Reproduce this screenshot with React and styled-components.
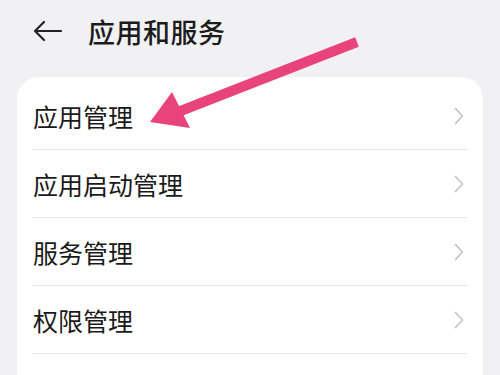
import React from "react"
import styled, { createGlobalStyle } from "styled-components"

const GlobalStyle = createGlobalStyle`
  html, body {
    margin: 0;
    padding: 0;
    background: #f1f1f3;
  }
  body {
    font-family: "Noto Sans CJK SC", "Noto Sans", sans-serif;
  }
`

const Screen = styled.div`
  position: relative;
  width: 500px;
  height: 375px;
  overflow: hidden;
  background: #f1f1f3;
`

const Header = styled.div`
  display: flex;
  align-items: center;
  height: 62px;
  padding: 0 0 0 33px;
  gap: 24px;
`

const BackButton = styled.div`
  display: flex;
  align-items: center;
  width: 31px;
  height: 24px;
  color: #222;
`

const Title = styled.h1`
  margin: 0;
  font-size: 27px;
  font-weight: 500;
  color: #1c1c1c;
  letter-spacing: 0.5px;
`

const Card = styled.div`
  margin: 15px 17px 0 17px;
  background: #fff;
  border-radius: 22px;
  padding: 5px 16px 0 16px;
`

const Row = styled.div`
  display: flex;
  align-items: center;
  justify-content: space-between;
  height: 67px;
  border-bottom: ${(p) => (p.last ? "none" : "1px solid #e6e6e6")};
`

const Label = styled.span`
  font-size: 25px;
  color: #1a1a1a;
  font-weight: 400;
`

const Chevron = styled.div`
  display: flex;
  align-items: center;
  padding-right: 3px;
  color: #c2c2c2;
`

const Overlay = styled.svg`
  position: absolute;
  left: 0;
  top: 0;
  pointer-events: none;
`

const items = ["应用管理", "应用启动管理", "服务管理", "权限管理", "默认应用"]

export default function App() {
  return (
    <Screen>
      <GlobalStyle />
      <Header>
        <BackButton>
          <svg width="30" height="22" viewBox="0 0 30 22" fill="none" stroke="currentColor" strokeWidth="2.2" strokeLinecap="round" strokeLinejoin="round">
            <path d="M28 11H3" />
            <path d="M11 2L2 11l9 9" />
          </svg>
        </BackButton>
        <Title>应用和服务</Title>
      </Header>
      <Card>
        {items.map((t, i) => (
          <Row key={t} last={i === items.length - 1}>
            <Label>{t}</Label>
            <Chevron>
              <svg width="10" height="18" viewBox="0 0 10 18" fill="none" stroke="currentColor" strokeWidth="1.6" strokeLinecap="round" strokeLinejoin="round">
                <path d="M1.5 1.5L8.5 9l-7 7.5" />
              </svg>
            </Chevron>
          </Row>
        ))}
      </Card>
      <Overlay width="500" height="375" viewBox="0 0 500 375">
        <line x1="357" y1="42" x2="178" y2="112" stroke="#e8437a" strokeWidth="10" />
        <polygon points="150,122 172,92 190,128" fill="#e8437a" />
      </Overlay>
    </Screen>
  )
}
